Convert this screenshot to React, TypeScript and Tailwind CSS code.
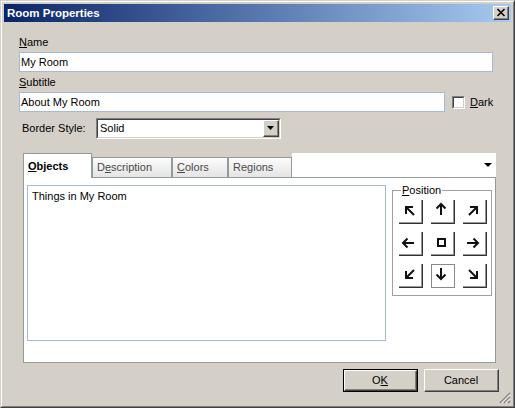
import React from 'react';

const arrowPaths: Record<string, string> = {
  nw: 'M7 14V7h7M7 7l8 8',
  n: 'M10 4v11M5.5 8.5l4.5-4.5 4.5 4.5',
  ne: 'M7 7h7v7M14 7l-8 8',
  w: 'M4 11h11M8.5 6.5l-4.5 4.5 4.5 4.5',
  e: 'M4 11h11M10.5 6.5l4.5 4.5-4.5 4.5',
  sw: 'M7 7v7h7M7 14l8-8',
  s: 'M10 4v11M5.5 10.5l4.5 4.5 4.5-4.5',
  se: 'M14 7v7H7M14 14L6 6',
};

const grid = ['nw', 'n', 'ne', 'w', 'c', 'e', 'sw', 's', 'se'];

function ArrowButton({ dir, selected }: { dir: string; selected?: boolean }) {
  return (
    <div
      className={
        selected
          ? 'w-[24px] h-[24px] bg-white border border-[#8a8a8a] flex'
          : 'w-[24px] h-[24px] bg-white border-r border-b border-r-[#303030] border-b-[#303030] shadow-[inset_-1px_-1px_0_#9a9a9a] flex'
      }
    >
      <svg
        width="22"
        height="22"
        viewBox={selected ? '1 1 22 22' : '0 0 22 22'}
        fill="none"
        stroke="#111"
        strokeWidth="2"
      >
        {dir === 'c' ? <rect x="7" y="7" width="7" height="7" /> : <path d={arrowPaths[dir]} />}
      </svg>
    </div>
  );
}

function Raised({ className, children }: { className: string; children?: React.ReactNode }) {
  return (
    <div className={`border border-t-white border-l-white border-b-[#404040] border-r-[#404040] ${className}`}>
      <div className="w-full h-full border-r border-b border-r-[#808080] border-b-[#808080] flex items-center justify-center">
        {children}
      </div>
    </div>
  );
}

export default function App() {
  return (
    <div className="w-[515px] h-[408px] bg-[#d4d0c8] border border-t-[#d4d0c8] border-l-[#d4d0c8] border-b-[#404040] border-r-[#404040] font-['Liberation_Sans',Arial,sans-serif] text-[11px] leading-[13px] text-black">
      <div className="h-full border border-t-white border-l-white border-b-[#808080] border-r-[#808080] p-[2px] flex flex-col">
        {/* title bar */}
        <div className="h-[18px] flex items-center pl-[3px] pr-[2px] bg-[linear-gradient(to_right,#0a246a,#a6caf0)]">
          <span className="flex-1 text-white font-bold text-[11.5px]">Room Properties</span>
          <Raised className="w-[16px] h-[14px] bg-[#d4d0c8]">
            <svg width="10" height="9" viewBox="0 0 10 9" fill="none" stroke="#000" strokeWidth="1.6">
              <path d="M1.5 1l7 7M8.5 1l-7 7" />
            </svg>
          </Raised>
        </div>

        <div className="flex-1 relative flex flex-col pl-[15px]">
          <div className="mt-[14px] h-[13px]">
            <span className="underline">N</span>ame
          </div>
          <div className="mt-[3px] w-[474px] h-[20px] bg-white border border-[#a5bad6] flex items-center pl-[1px]">
            My Room
          </div>

          <div className="mt-[4px] h-[13px]">
            <span className="underline">S</span>ubtitle
          </div>
          <div className="mt-[3px] flex items-center">
            <div className="w-[426px] h-[20px] bg-white border border-[#a5bad6] flex items-center pl-[1px]">
              About My Room
            </div>
            <div className="ml-[7px] w-[13px] h-[13px] border border-t-[#808080] border-l-[#808080] border-b-white border-r-white">
              <div className="w-full h-full bg-white border border-t-[#404040] border-l-[#404040] border-b-[#d4d0c8] border-r-[#d4d0c8]" />
            </div>
            <span className="ml-[5px]">
              <span className="underline">D</span>ark
            </span>
          </div>

          <div className="mt-[6px] flex items-center">
            <span className="ml-[3px] w-[74px]">Border Style:</span>
            <div className="w-[185px] h-[21px] border border-t-[#808080] border-l-[#808080] border-b-white border-r-white">
              <div className="w-full h-full bg-white border border-t-[#404040] border-l-[#404040] border-b-[#d4d0c8] border-r-[#d4d0c8] flex items-center">
                <span className="flex-1 pl-[2px]">Solid</span>
                <Raised className="w-[16px] h-full bg-[#d4d0c8]">
                  <svg width="7" height="4" viewBox="0 0 7 4">
                    <path d="M0 0h7L3.5 4z" fill="#000" />
                  </svg>
                </Raised>
              </div>
            </div>
          </div>

          {/* tabs */}
          <div className="ml-[4px] mt-[14px] w-[473px] h-[24px] flex items-end">
            <div className="relative z-10 -mb-px w-[69px] h-[25px] bg-white border border-b-0 border-[#919b9c] flex items-center pl-[4px] font-bold">
              <span>
                <span className="underline">O</span>bjects
              </span>
            </div>
            <div className="w-[80px] h-[20px] border border-b-0 border-[#919b9c] bg-[linear-gradient(#fcfcfc,#e4e4e4)] flex items-center pl-[4px] text-[#4a4a4a]">
              <span>
                D<span className="underline">e</span>scription
              </span>
            </div>
            <div className="w-[56px] h-[20px] border border-b-0 border-[#919b9c] bg-[linear-gradient(#fcfcfc,#e4e4e4)] flex items-center pl-[4px] text-[#4a4a4a]">
              <span>
                <span className="underline">C</span>olors
              </span>
            </div>
            <div className="w-[64px] h-[20px] border border-b-0 border-[#919b9c] bg-[linear-gradient(#fcfcfc,#e4e4e4)] flex items-center pl-[4px] text-[#4a4a4a]">
              <span>
                Re<span className="underline">g</span>ions
              </span>
            </div>
            <div className="flex-1 h-[24px] bg-white flex items-center justify-end pr-[4px]">
              <svg width="8" height="4" viewBox="0 0 8 4">
                <path d="M0 0h8L4 4z" fill="#000" />
              </svg>
            </div>
          </div>

          <div className="ml-[4px] w-[473px] h-[186px] bg-white border border-[#919b9c] flex items-start pt-[7px] pl-[3px]">
            <div className="w-[359px] h-[156px] border border-[#a5bad6] pl-[4px] pt-[4px]">Things in My Room</div>
            <div className="relative ml-[6px] mt-[5px] w-[100px] h-[106px] border border-[#a0a0a0] pl-[6px] pt-[9px]">
              <span className="absolute left-[8px] -top-[7px] bg-white px-[1px]">
                <span className="underline">P</span>osition
              </span>
              <div className="grid grid-cols-3 gap-[8px] w-[88px]">
                {grid.map((d) => (
                  <ArrowButton key={d} dir={d} selected={d === 's'} />
                ))}
              </div>
            </div>
          </div>

          <div className="mt-[6px] flex justify-end gap-[6px] pr-[12px]">
            <div className="w-[75px] h-[23px] border border-black">
              <div className="w-full h-full border border-t-white border-l-white border-b-[#404040] border-r-[#404040]">
                <div className="w-full h-full border-r border-b border-r-[#808080] border-b-[#808080] flex items-center justify-center">
                  <span>
                    O<span className="underline">K</span>
                  </span>
                </div>
              </div>
            </div>
            <Raised className="w-[75px] h-[23px]">Cancel</Raised>
          </div>

          <svg className="absolute right-0 bottom-0" width="12" height="12" viewBox="0 0 12 12">
            <path d="M11 1L1 11M11 5L5 11M11 9L9 11" stroke="#808080" strokeWidth="1.4" />
            <path d="M11 2.5L2.5 11M11 6.5L6.5 11" stroke="#fff" strokeWidth="0.8" />
          </svg>
        </div>
      </div>
    </div>
  );
}
